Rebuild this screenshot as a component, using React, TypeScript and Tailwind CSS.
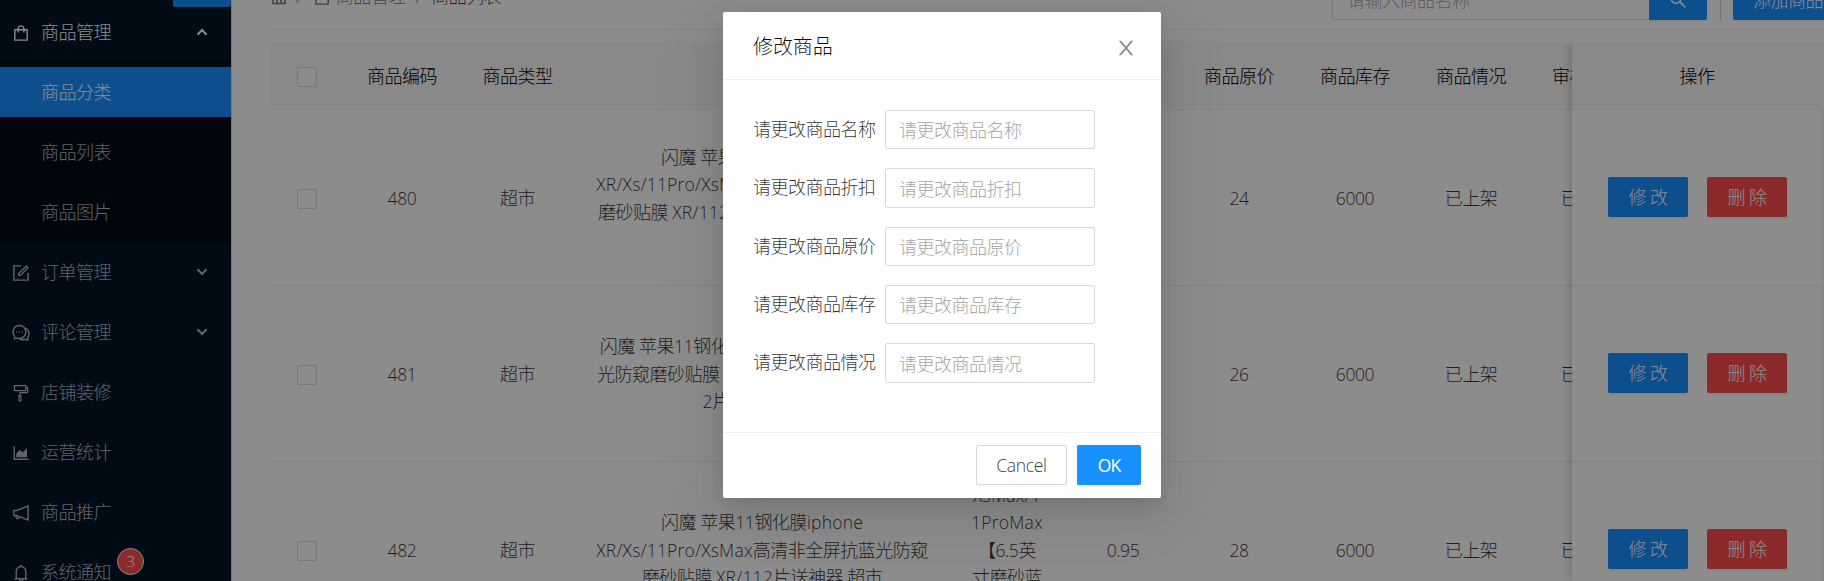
import React from 'react';
import { AiOutlineShopping, AiOutlineForm, AiOutlineComment, AiOutlineFormatPainter, AiOutlineAreaChart, AiOutlineNotification, AiOutlineBell, AiOutlineSearch } from 'react-icons/ai';

const menuAfter = [
  { label: '订单管理', icon: AiOutlineForm, arrow: true },
  { label: '评论管理', icon: AiOutlineComment, arrow: true },
  { label: '店铺装修', icon: AiOutlineFormatPainter },
  { label: '运营统计', icon: AiOutlineAreaChart },
  { label: '商品推广', icon: AiOutlineNotification },
  { label: '系统通知', icon: AiOutlineBell, badge: 3 },
];

const columns = 'grid grid-cols-[74px_116px_115px_374px_116px_116px_116px_116px_116px_116px] w-[1375px] items-center text-center pt-[2px]';

const rows = [
  {
    id: 480,
    title: ['闪魔 苹果11钢化膜iphone', 'XR/Xs/11Pro/XsMax高清非全屏抗蓝光防窥', '磨砂贴膜 XR/112片送神器 自动吸附高清膜', '超市'],
    spec: ['XR/11', '【6.1英', '寸高清'],
    off: '0.95',
    price: 24,
  },
  {
    id: 481,
    title: ['闪魔 苹果11钢化膜iphone高清非全屏抗蓝', '光防窥磨砂贴膜 XR/11Pro/XsMax/XR/Xs11', '2片送神器 超市'],
    spec: ['Xs/11Pro', '【5.8英', '寸高清'],
    off: '0.95',
    price: 26,
  },
  {
    id: 482,
    title: ['闪魔 苹果11钢化膜iphone', 'XR/Xs/11Pro/XsMax高清非全屏抗蓝光防窥', '磨砂贴膜 XR/112片送神器 超市'],
    spec: ['XsMax/1', '1ProMax', '【6.5英', '寸磨砂蓝', '光】'],
    off: '0.95',
    price: 28,
  },
];

const fields = ['请更改商品名称', '请更改商品折扣', '请更改商品原价', '请更改商品库存', '请更改商品情况'];

/* Latin letters and digits are sized and spaced apart from the Chinese text around them. */
function T({ children }: { children: string }) {
  return (
    <>
      {children.split(/([!-~]+)/).map((part, i) => {
        if (i % 2 === 0) return part;
        return /[A-Za-z]/.test(part) ? (
          <span key={i} className="text-[17.5px] tracking-[0.2px]">{part}</span>
        ) : (
          <span key={i} className="text-[17.5px] tracking-[-0.4px]">{part}</span>
        );
      })}
    </>
  );
}

function Chevron({ up = false }: { up?: boolean }) {
  return (
    <svg viewBox="0 0 12 8" className="mb-[1px] ml-auto h-[8px] w-[12px]" fill="none" stroke="currentColor" strokeWidth="2">
      <path d={up ? 'M1.5 6.8 6 2l4.500 4.800' : 'M1.500 1.200 6 6l4.500-4.800'} />
    </svg>
  );
}

function Sidebar() {
  return (
    <aside className="flex h-[581px] w-[231px] shrink-0 flex-col overflow-hidden bg-[#001529] text-white/70">
      <div className="flex h-[7px] shrink-0 justify-end">
        <div className="h-[7px] w-[58px] rounded-b-[2px] bg-[#1890ff]" />
      </div>
      <div className="flex h-[50px] shrink-0 items-center pl-[11px] pr-[23px] pt-[1px] text-white">
        <AiOutlineShopping className="mr-[10px] size-[20px]" />
        <span>商品管理</span>
        <Chevron up />
      </div>
      <div className="mt-[5px] flex shrink-0 flex-col gap-[10px] bg-[#000c17] py-[5px]">
        <div className="flex h-[50px] items-center bg-[#1890ff] pl-[41px] pt-[2px] text-white">商品分类</div>
        <div className="flex h-[50px] items-center pl-[41px] pt-[2px]">商品列表</div>
        <div className="flex h-[50px] items-center pl-[41px] pt-[2px]">商品图片</div>
      </div>
      <div className="mt-[5px] flex shrink-0 flex-col gap-[10px]">
        {menuAfter.map(({ label, icon: Icon, arrow, badge }) => (
          <div key={label} className="flex h-[50px] items-center pl-[11px] pr-[23px] pt-[1px]">
            <Icon className="mr-[10px] size-[20px]" />
            <span className="relative">
              {label}
              {badge && (
                <span className="absolute -top-[11px] left-[76px] flex size-[27px] items-center justify-center rounded-full border border-white bg-[#ff4d4f] text-[15px] text-white">
                  {badge}
                </span>
              )}
            </span>
            {arrow && <Chevron />}
          </div>
        ))}
      </div>
    </aside>
  );
}

function TopBar() {
  return (
    <div className="flex h-[29px] shrink-0 items-start border-b border-[#f0f0f0] box-content text-black/55">
      <div className="-mt-[17px] flex h-[28px] items-center">
        <svg viewBox="0 0 18 18" className="ml-[1px] size-[18px]" fill="none" stroke="currentColor" strokeWidth="1.500">
          <path d="M1.500 6.500 8 1.500l6.500 5M2 6.500v9h12v-9zM6 8v7M10 8v7" />
        </svg>
        <span className="ml-[7px] mr-[10px]">/</span>
        <AiOutlineShopping className="mr-[4px] size-[20px]" />
        <span>商品管理</span>
        <span className="mx-[10px]">/</span>
        <span className="text-black/75">商品列表</span>
      </div>
      <div className="-mt-[20px] ml-auto flex h-[40px] items-center">
        <div className="flex h-[39px] w-[317px] items-center rounded-l-[2px] border border-r-0 border-[#d9d9d9] pl-[14px] pt-[2px] text-[#a8a8a8]">
          请输入商品名称
        </div>
        <div className="flex h-[40px] w-[58px] items-center justify-center rounded-r-[2px] bg-[#1890ff] text-white shadow-[0_2px_0_rgba(0,0,0,0.045)]">
          <AiOutlineSearch className="size-[20px]" />
        </div>
        <div className="ml-[13px] h-[40px] w-px bg-[#d0d0d0]" />
        <div className="ml-[12px] flex h-[40px] w-[91px] items-center overflow-hidden whitespace-nowrap rounded-l-[2px] bg-[#1890ff] pl-[20px] pt-[2px] text-white shadow-[0_2px_0_rgba(0,0,0,0.045)]">
          添加商品
        </div>
      </div>
    </div>
  );
}

function Check() {
  return <span className="mx-auto block size-[20px] rounded-[2px] border border-[#d9d9d9] bg-white" />;
}

function Table() {
  return (
    <div className="mt-[12px] flex overflow-hidden">
      <div className="w-[1302px] shrink-0 overflow-hidden">
        <div className={`${columns} h-[68px] border-b border-[#f0f0f0] bg-[#fafafa] text-black`}>
          <Check />
          {['商品编码', '商品类型', '商品名称', '商品规格', '商品折扣', '商品原价', '商品库存', '商品情况', '审核状态'].map((h) => (
            <span key={h}>{h}</span>
          ))}
        </div>
        {rows.map((r) => (
          <div key={r.id} className={`${columns} h-[176px] border-b border-[#f0f0f0] text-black/80`}>
            <Check />
            <span><T>{String(r.id)}</T></span>
            <span>超市</span>
            <div className="whitespace-nowrap">{r.title.map((l, i) => <div key={i} className="h-[27.5px]"><T>{l}</T></div>)}</div>
            <div className="whitespace-nowrap">{r.spec.map((l, i) => <div key={i} className="h-[27.5px]"><T>{l}</T></div>)}</div>
            <span><T>{r.off}</T></span>
            <span><T>{String(r.price)}</T></span>
            <span><T>6000</T></span>
            <span>已上架</span>
            <span>已审核</span>
          </div>
        ))}
      </div>
      <div className="z-10 flex-1 bg-white shadow-[-6px_0_8px_-2px_rgba(0,0,0,0.15)]">
        <div className="flex h-[68px] items-center justify-center border-b border-[#f0f0f0] bg-[#fafafa] pr-[2px] pt-[2px] text-black">操作</div>
        <div className="border-r-2 border-[#f3f3f3]">
          {rows.map((r) => (
            <div key={r.id} className="flex h-[176px] items-center gap-[19px] border-b border-[#f0f0f0] pb-[1px] pl-[36px] text-white">
              <div className="flex h-[40px] w-[80px] items-center justify-center rounded-[2px] bg-[#1890ff] pt-[2px] shadow-[0_2px_0_rgba(0,0,0,0.045)]">修 改</div>
              <div className="flex h-[40px] w-[80px] items-center justify-center rounded-[2px] bg-[#ff4d4f] pt-[2px] shadow-[0_2px_0_rgba(0,0,0,0.045)]">删 除</div>
            </div>
          ))}
        </div>
      </div>
    </div>
  );
}

function CloseIcon() {
  return (
    <svg viewBox="64 64 896 896" className="mt-[1px] size-[20px] text-black/45" fill="currentColor">
      <path d="M563.8 512l262.5-312.9c4.4-5.2.7-13.1-6.1-13.1h-79.8c-4.7 0-9.2 2.1-12.3 5.7L511.6 449.8 295.1 191.7c-3-3.6-7.5-5.7-12.3-5.7H203c-6.8 0-10.5 7.9-6.1 13.1L459.4 512 196.900 824.900A7.950 7.950 0 0 0 203 838h79.800c4.700 0 9.200-2.100 12.300-5.700l216.500-258.100 216.500 258.100c3 3.600 7.500 5.700 12.300 5.700h79.800c6.800 0 10.500-7.900 6.100-13.100L563.800 512z" />
    </svg>
  );
}

function Modal() {
  return (
    <div className="absolute inset-0 z-20 flex items-start bg-black/45 pl-[723px] pt-[12px]">
      <div className="flex h-[486px] w-[438px] flex-col rounded-[2px] bg-white shadow-[0_8px_20px_-8px_rgba(0,0,0,0.12),0_12px_35px_rgba(0,0,0,0.08),0_15px_60px_20px_rgba(0,0,0,0.05)]">
        <div className="flex h-[68px] shrink-0 items-center justify-between border-b border-[#f0f0f0] pl-[30px] pr-[25px] pt-[3px] text-[20px] tracking-[-0.1px] text-black/95">
          <span>修改商品</span>
          <CloseIcon />
        </div>
        <div className="flex flex-1 flex-col gap-[18.9px] pl-[30px] pt-[30px]">
          {fields.map((f) => (
            <label key={f} className="flex items-center text-black/80">
              <span className="w-[132px]">{f}</span>
              <span className="flex h-[39.4px] w-[210px] items-center rounded-[2px] border border-[#d9d9d9] pl-[13px] pt-[3px] text-[#a6a6a6]">{f}</span>
            </label>
          ))}
        </div>
        <div className="flex h-[66px] shrink-0 items-start justify-end gap-[10px] border-t border-[#f0f0f0] pr-[20px] pt-[12px]">
          <button className="h-[40px] w-[91px] rounded-[2px] border border-[#d9d9d9] pt-[2px] text-[17.5px] tracking-[-0.3px] text-black/80 shadow-[0_2px_0_rgba(0,0,0,0.015)]">Cancel</button>
          <button className="h-[40px] w-[64px] rounded-[2px] bg-[#1890ff] pt-[2px] text-[17.5px] font-normal tracking-[-0.8px] text-white shadow-[0_2px_0_rgba(0,0,0,0.045)]">OK</button>
        </div>
      </div>
    </div>
  );
}

export default function App() {
  return (
    <div className="relative flex h-[581px] w-[1824px] overflow-hidden bg-white font-['Open_Sans','Noto_Sans_CJK_SC',sans-serif] text-[18px] font-light leading-[27.5px] tracking-[-0.5px]">
      <Sidebar />
      <main className="flex min-w-0 flex-1 flex-col overflow-hidden border-l border-[#d9d9d9] pl-[38px]">
        <TopBar />
        <Table />
      </main>
      <Modal />
    </div>
  );
}
